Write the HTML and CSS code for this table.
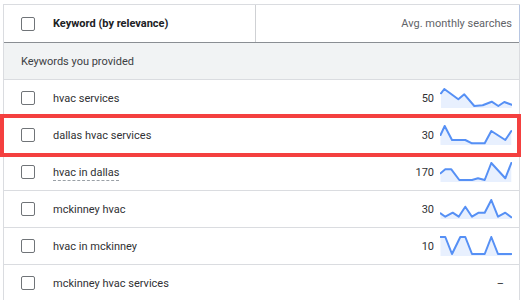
FILE: index.html
```html
<!DOCTYPE html>
<html>
<head>
<meta charset="utf-8">
<link rel="stylesheet" href="styles.css">
</head>
<body>
<div class="table">
  <div class="row header">
    <div class="kw head-kw"><span class="cb"></span><span class="hk">Keyword (by relevance)</span></div>
    <div class="vol head-vol">Avg. monthly searches</div>
  </div>
  <div class="section">Keywords you provided</div>

  <div class="row">
    <div class="kw"><span class="cb"></span><span>hvac services</span></div>
    <div class="vol"><span class="num">50</span>
      <svg class="spark" width="72" height="20" viewBox="0 0 72 20"><polygon class="area" points="1,5.3 4.3,1 18.3,11.3 24.3,6.3 34.3,18 42.7,17.3 51.7,13.7 58.3,18 64.3,14 71.7,16.7 71.7,20 1,20"/><polyline class="line" points="1,5.3 4.3,1 18.3,11.3 24.3,6.3 34.3,18 42.7,17.3 51.7,13.7 58.3,18 64.3,14 71.7,16.7"/></svg>
    </div>
  </div>

  <div class="row">
    <div class="kw"><span class="cb"></span><span>dallas hvac services</span></div>
    <div class="vol"><span class="num">30</span>
      <svg class="spark" width="72" height="20" viewBox="0 0 72 20"><polygon class="area" points="0.5,10 4.7,1 12,15 25.3,15 32,18.3 44.7,18.3 51.3,6 65.3,15 71.3,6 71.3,20 0.5,20"/><polyline class="line" points="0.5,10 4.7,1 12,15 25.3,15 32,18.3 44.7,18.3 51.3,6 65.3,15 71.3,6"/></svg>
    </div>
  </div>

  <div class="row">
    <div class="kw"><span class="cb"></span><span class="dashed">hvac in dallas</span></div>
    <div class="vol"><span class="num">170</span>
      <svg class="spark" width="72" height="20" viewBox="0 0 72 20"><polygon class="area" points="0.5,11.3 5.3,7.3 11.3,7.3 19.3,18 32,18 38,16.3 44.7,18 51.3,1 65.3,16.3 71.3,1 71.3,20 0.5,20"/><polyline class="line" points="0.5,11.3 5.3,7.3 11.3,7.3 19.3,18 32,18 38,16.3 44.7,18 51.3,1 65.3,16.3 71.3,1"/></svg>
    </div>
  </div>

  <div class="row">
    <div class="kw"><span class="cb"></span><span>mckinney hvac</span></div>
    <div class="vol"><span class="num">30</span>
      <svg class="spark" width="72" height="20" viewBox="0 0 72 20"><polygon class="area" points="0.5,14.3 5.3,17.7 12.7,13.7 18.7,17.7 25.3,7.7 32,17.7 38.7,13.7 44.7,13.7 51.3,1 58,17.7 65.3,13.7 71.3,18.3 71.3,20 0.5,20"/><polyline class="line" points="0.5,14.3 5.3,17.7 12.7,13.7 18.7,17.7 25.3,7.7 32,17.7 38.7,13.7 44.7,13.7 51.3,1 58,17.7 65.3,13.7 71.3,18.3"/></svg>
    </div>
  </div>

  <div class="row">
    <div class="kw"><span class="cb"></span><span>hvac in mckinney</span></div>
    <div class="vol"><span class="num">10</span>
      <svg class="spark" width="72" height="20" viewBox="0 0 72 20"><polygon class="area" points="0.5,1 5.3,1 12,18 20.3,1 25.3,1 32,18 44.7,18 51.3,1 58,18 71.3,18 71.3,20 0.5,20"/><polyline class="line" points="0.5,1 5.3,1 12,18 20.3,1 25.3,1 32,18 44.7,18 51.3,1 58,18 71.3,18"/></svg>
    </div>
  </div>

  <div class="row">
    <div class="kw"><span class="cb"></span><span>mckinney hvac services</span></div>
    <div class="vol dash-cell"><span class="num">–</span></div>
  </div>
</div>
<div class="highlight"></div>
</body>
</html>
```
FILE: styles.css
```css
html, body {
  margin: 0;
  padding: 0;
  background: #ffffff;
}
body {
  width: 522px;
  height: 300px;
  overflow: hidden;
  position: relative;
  font-family: Roboto, "Liberation Sans", Arial, sans-serif;
  font-size: 11px;
  color: #303134;
}
.table {
  margin: 4px 0 0 3px;
  width: 517px;
  box-sizing: border-box;
  border-top: 1px solid #dadce0;
  border-left: 1px solid #dadce0;
  border-right: 1px solid #dadce0;
}
.row {
  display: flex;
  align-items: stretch;
  height: 37px;
  box-sizing: border-box;
  border-bottom: 1px solid #dadce0;
}
.header {
  height: 38px;
  border-bottom: 1px solid #8a8e93;
}
.kw {
  flex: 1;
  display: flex;
  align-items: center;
}
.head-kw {
  flex: 0 0 251px;
  border-right: 1px solid #cfd1d4;
}
.hk {
  font-weight: bold;
  color: #202124;
}
.cb {
  width: 14px;
  height: 14px;
  box-sizing: border-box;
  border: 1px solid #707478;
  border-radius: 2px;
  margin-left: 17px;
  margin-right: 18px;
  flex: none;
}
.vol {
  display: flex;
  align-items: center;
  justify-content: flex-end;
  padding-right: 7px;
}
.head-vol {
  flex: 1;
  color: #5f6368;
  box-shadow: inset -1px 0 0 #b7c6e2;
  margin-right: -1px;
  padding-right: 8px;
}
.section {
  height: 37px;
  box-sizing: border-box;
  border-bottom: 1px solid #dadce0;
  background: #f1f3f4;
  display: flex;
  align-items: center;
  padding-left: 17px;
  color: #3c4043;
}
.num {
  margin-right: 6px;
}
.dash-cell {
  padding-right: 15px;
}
.dash-cell .num {
  margin-right: 0;
}
.dashed {
  border-bottom: 1px dashed #9aa0a6;
  padding-bottom: 1px;
  margin-top: 2px;
}
.spark {
  display: block;
  flex: none;
}
.spark .area {
  fill: #e8f0fe;
  stroke: none;
}
.spark .line {
  fill: none;
  stroke: #5690f5;
  stroke-width: 2;
  stroke-linejoin: round;
  stroke-linecap: round;
}
.highlight {
  position: absolute;
  left: 0;
  top: 114px;
  width: 521px;
  height: 43px;
  box-sizing: border-box;
  border: 4px solid #f4403f;
}
```
